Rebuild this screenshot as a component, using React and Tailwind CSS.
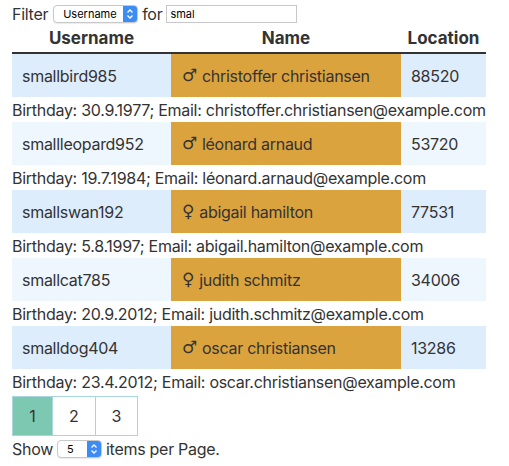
import React from 'react';

const users = [
  { username: 'smallbird985', gender: '♂', name: 'christoffer christiansen', location: '88520', birthday: '30.9.1977', email: 'christoffer.christiansen@example.com' },
  { username: 'smallleopard952', gender: '♂', name: 'léonard arnaud', location: '53720', birthday: '19.7.1984', email: 'léonard.arnaud@example.com' },
  { username: 'smallswan192', gender: '♀', name: 'abigail hamilton', location: '77531', birthday: '5.8.1997', email: 'abigail.hamilton@example.com' },
  { username: 'smallcat785', gender: '♀', name: 'judith schmitz', location: '34006', birthday: '20.9.2012', email: 'judith.schmitz@example.com' },
  { username: 'smalldog404', gender: '♂', name: 'oscar christiansen', location: '13286', birthday: '23.4.2012', email: 'oscar.christiansen@example.com' },
];

function FakeSelect({ value, className }) {
  return (
    <div className={`flex items-center h-[18px] rounded-[4px] border border-[#c8c8c8] bg-white shadow-[0_1px_1px_rgba(0,0,0,0.08)] overflow-hidden ${className}`}>
      <span className="flex-1 pl-[9px] text-[11px] leading-none text-black tracking-normal">{value}</span>
      <span className="w-[14px] h-full bg-[#3b8cf5] flex items-center justify-center">
        <svg width="8" height="12" viewBox="0 0 8 12" fill="none" stroke="white" strokeWidth="1.3">
          <path d="M1.5 4.5 L4 2 L6.5 4.5" />
          <path d="M1.5 7.5 L4 10 L6.5 7.5" />
        </svg>
      </span>
    </div>
  );
}

export default function App() {
  return (
    <div className="w-[509px] h-[466px] bg-white text-[#333] text-[16px] tracking-[-0.28px] px-[12px] pt-[4px]" style={{ fontFamily: 'Inter, "Noto Sans", sans-serif' }}>
      <div className="flex items-center h-[20px] gap-[4px]">
        <span>Filter</span>
        <FakeSelect value="Username" className="w-[85px] ml-[1px]" />
        <span>for</span>
        <div className="w-[131px] h-[18px] border border-[#c8c8c8] text-[11px] text-black flex items-center pl-[3px] tracking-normal">smal</div>
      </div>

      <div className="w-[474px] mt-[2px]">
        <div className="grid grid-cols-[159px_230px_85px] font-bold text-[17px] tracking-normal h-[28px] items-center border-b-2 border-[#333]">
          <div className="text-center">Username</div>
          <div className="text-center">Name</div>
          <div className="text-center">Location</div>
        </div>
        {users.map((u, i) => (
          <div key={u.username}>
            <div className="grid grid-cols-[159px_230px_85px] h-[43px] items-stretch">
              <div className={`flex items-center pl-[10px] ${i % 2 === 0 ? 'bg-[#deedfc]' : 'bg-[#eef6fe]'}`}>{u.username}</div>
              <div className="flex items-center pl-[11px] bg-[#dba33e]">
                <span className="text-[17px] mr-[5px]" style={{ fontFamily: '"DejaVu Sans", sans-serif' }}>{u.gender}</span>
                {u.name}
              </div>
              <div className={`flex items-center pl-[10px] ${i % 2 === 0 ? 'bg-[#deedfc]' : 'bg-[#eef6fe]'}`}>{u.location}</div>
            </div>
            <div className="h-[25px] flex items-center whitespace-nowrap">Birthday: {u.birthday}; Email: {u.email}</div>
          </div>
        ))}
      </div>

      <div className="flex mt-[2px] tracking-normal">
        <div className="w-[41px] h-[40px] flex items-center justify-center bg-[#7dc8b1] border border-[#a9d5df]">1</div>
        <div className="w-[43px] h-[40px] flex items-center justify-center border border-l-0 border-[#a9d5df]">2</div>
        <div className="w-[42px] h-[40px] flex items-center justify-center border border-l-0 border-[#a9d5df]">3</div>
      </div>

      <div className="flex items-center h-[26px] gap-[4px]">
        <span>Show</span>
        <FakeSelect value="5" className="w-[45px]" />
        <span>items per Page.</span>
      </div>
    </div>
  );
}
